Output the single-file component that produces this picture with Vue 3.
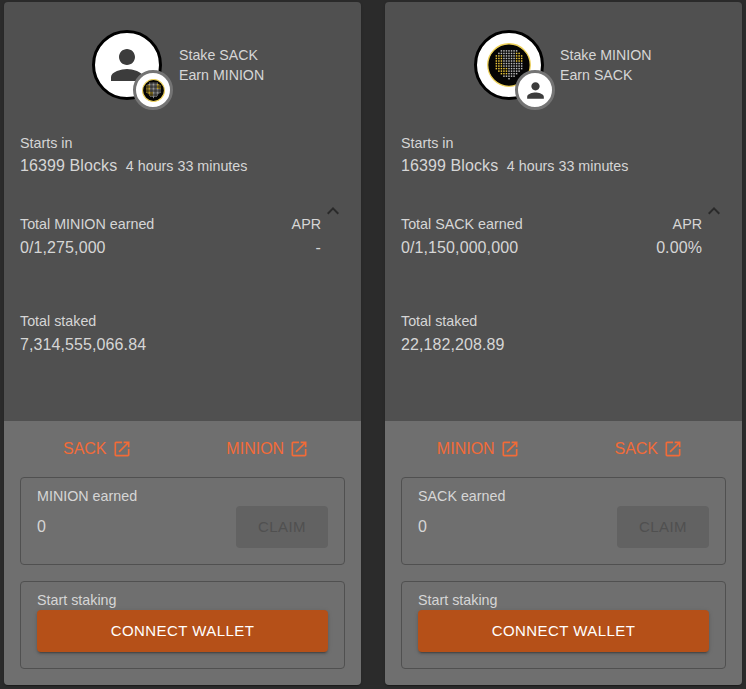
<script setup>
const cards = [
  { stake: 'SACK', earn: 'MINION', big: 'user', apr: '-', total: '0/1,275,000', staked: '7,314,555,066.84' },
  { stake: 'MINION', earn: 'SACK', big: 'logo', apr: '0.00%', total: '0/1,150,000,000', staked: '22,182,208.89' },
]
const personPath = 'M12 12c2.21 0 4-1.79 4-4s-1.79-4-4-4-4 1.79-4 4 1.79 4 4 4zm0 2c-2.67 0-8 1.34-8 4v2h16v-2c0-2.66-5.33-4-8-4z'
const openPath = 'M19 19H5V5h7V3H5c-1.11 0-2 .9-2 2v14c0 1.1.89 2 2 2h14c1.1 0 2-.9 2-2v-7h-2v7zM14 3v2h3.59l-9.83 9.83 1.41 1.41L19 6.41V10h2V3h-7z'
const halfWidths = [3, 4, 5, 5, 5, 5, 5, 5, 4, 3, 2, 0]
const dots = []
halfWidths.forEach((half, row) => {
  for (let col = 5 - half; col <= 5 + half; col++) {
    const yellow = (col < 3 && row > 1 && row < 10) || (col > 7 && row > 0 && row < 5) || (row > 6 && row < 10 && col > 2 && col < 5)
    dots.push({ x: 10.2 + col * 2.76, y: 8.6 + row * 2.76, fill: yellow ? '#efc93c' : '#bdbdbd' })
  }
})
</script>

<template>
  <div class="page">
    <section v-for="card in cards" :key="card.stake" class="card">
      <div class="top">
        <header class="head" :class="{ 'head-logo': card.big === 'logo' }">
          <div class="avatar">
            <svg v-if="card.big === 'user'" class="big-person" viewBox="0 0 24 24"><path :d="personPath" /></svg>
            <svg v-else class="big-logo" viewBox="0 0 48 48">
              <circle cx="24" cy="24" r="23.2" fill="#050505" stroke="#f0d35a" stroke-width="1.4" />
              <rect v-for="(d, i) in dots" :key="i" :x="d.x - 0.8" :y="d.y - 0.8" width="1.6" height="1.6" :fill="d.fill" />
            </svg>
            <div class="badge">
              <svg v-if="card.big === 'logo'" class="small-person" viewBox="0 0 24 24"><path :d="personPath" /></svg>
              <svg v-else class="small-logo" viewBox="0 0 48 48">
                <circle cx="24" cy="24" r="22.8" fill="#050505" stroke="#f0d35a" stroke-width="2.2" />
                <rect v-for="(d, i) in dots" :key="i" :x="d.x - 0.95" :y="d.y - 0.95" width="1.9" height="1.9" :fill="d.fill" />
              </svg>
            </div>
          </div>
          <div class="head-text">
            <div>Stake {{ card.stake }}</div>
            <div>Earn {{ card.earn }}</div>
          </div>
        </header>

        <div class="starts">
          <div class="label">Starts in</div>
          <div class="value">16399 Blocks <small>4 hours 33 minutes</small></div>
        </div>

        <div class="earned">
          <div>
            <div class="label">Total {{ card.earn }} earned</div>
            <div class="value">{{ card.total }}</div>
          </div>
          <div class="apr">
            <div class="label">APR</div>
            <div class="value">{{ card.apr }}</div>
          </div>
          <svg class="chevron" viewBox="0 0 24 24"><path d="M12 8l-6 6 1.41 1.41L12 10.83l4.59 4.58L18 14z" /></svg>
        </div>

        <div class="staked">
          <div class="label">Total staked</div>
          <div class="value">{{ card.staked }}</div>
        </div>
      </div>

      <div class="bottom">
        <div class="links">
          <a class="link">{{ card.stake }}<svg viewBox="0 0 24 24"><path :d="openPath" /></svg></a>
          <a class="link">{{ card.earn }}<svg viewBox="0 0 24 24"><path :d="openPath" /></svg></a>
        </div>
        <div class="box claim-box">
          <div class="label">{{ card.earn }} earned</div>
          <div class="claim-row">
            <div class="value">0</div>
            <button class="claim" disabled>CLAIM</button>
          </div>
        </div>
        <div class="box stake-box">
          <div class="label">Start staking</div>
          <button class="connect">CONNECT WALLET</button>
        </div>
      </div>
    </section>
  </div>
</template>

<style>
html, body { background: #2b2b2b; }
</style>

<style scoped>
.page {
  display: flex;
  gap: 24px;
  padding: 2px 4px;
  width: 746px;
  height: 689px;
  box-sizing: border-box;
  overflow: hidden;
  font-family: "Liberation Sans", Arial, sans-serif;
  color: #d6d6d6;
}
.card {
  width: 357px;
  height: 683px;
  border-radius: 4px;
  overflow: hidden;
  display: flex;
  flex-direction: column;
  box-shadow: 0 2px 1px -1px rgba(0,0,0,.2), 0 1px 1px rgba(0,0,0,.14), 0 1px 3px rgba(0,0,0,.12);
}
.top {
  height: 419px;
  background: #505050;
  padding: 28px 16px 0;
  box-sizing: border-box;
}
.head {
  display: flex;
  gap: 17px;
  height: 70px;
  margin-left: 72px;
}
.head-logo {
  gap: 16px;
  margin-left: 73px;
}
.avatar {
  position: relative;
  width: 70px;
  height: 70px;
  box-sizing: border-box;
  border: 3px solid #000;
  border-radius: 50%;
  background: #fff;
  display: flex;
  align-items: center;
  justify-content: center;
}
.big-person { width: 48px; height: 48px; fill: #3c3c3c; }
.big-logo { width: 44px; height: 44px; }
.badge {
  position: absolute;
  right: -14px;
  bottom: -13px;
  width: 40px;
  height: 40px;
  box-sizing: border-box;
  border: 3px solid #747474;
  border-radius: 50%;
  background: #fff;
  display: flex;
  align-items: center;
  justify-content: center;
}
.small-person { width: 25px; height: 25px; fill: #3c3c3c; }
.small-logo { width: 23px; height: 23px; }
.head-text {
  font-size: 14.2px;
  line-height: 20px;
  padding-top: 15px;
}
.label {
  font-size: 14.3px;
  line-height: 20px;
}
.value {
  font-size: 16px;
  line-height: 24px;
  letter-spacing: .1px;
}
.value small {
  font-size: 14.3px;
  letter-spacing: 0;
  margin-left: 4px;
}
.starts { margin-top: 33px; }
.starts .value { margin-top: 1px; }
.earned {
  position: relative;
  display: flex;
  justify-content: space-between;
  margin-top: 36px;
  padding-right: 24px;
}
.earned .value { margin-top: 2px; }
.staked .value { margin-top: 2px; }
.apr { text-align: right; }
.chevron {
  position: absolute;
  right: 0;
  top: -15px;
  width: 24px;
  height: 24px;
  fill: #2a2a2a;
}
.staked { margin-top: 51px; }
.bottom {
  flex: 1;
  background: #6f6f6f;
  padding: 0 16px;
}
.links {
  display: grid;
  grid-template-columns: 1fr 1fr;
  justify-items: center;
  margin: 0 -8px;
  height: 56px;
  align-items: center;
}
.link {
  display: inline-flex;
  align-items: center;
  gap: 5px;
  font-size: 16px;
  color: #f26b38;
}
.link svg { width: 20px; height: 20px; fill: #f26b38; }
.box {
  width: 325px;
  height: 88px;
  box-sizing: border-box;
  border: 1px solid #505050;
  border-radius: 4px;
  padding: 8px 16px 0;
}
.claim-box { margin-bottom: 16px; }
.claim-row {
  display: flex;
  justify-content: space-between;
  align-items: center;
}
.claim-row .value { margin-top: -1px; }
.claim, .connect {
  font-family: inherit;
  font-size: 15px;
  border: 0;
  border-radius: 4px;
  height: 42px;
  padding: 0 0 2px;
  letter-spacing: .43px;
}
.claim {
  width: 92px;
  background: #626262;
  color: #505050;
}
.connect {
  width: 291px;
  background: #b55018;
  color: #fff;
  margin-top: -1px;
  box-shadow: 0 3px 1px -2px rgba(0,0,0,.2), 0 2px 2px rgba(0,0,0,.14), 0 1px 5px rgba(0,0,0,.12);
}
.stake-box .label { line-height: 20px; margin-bottom: 1px; }
</style>
